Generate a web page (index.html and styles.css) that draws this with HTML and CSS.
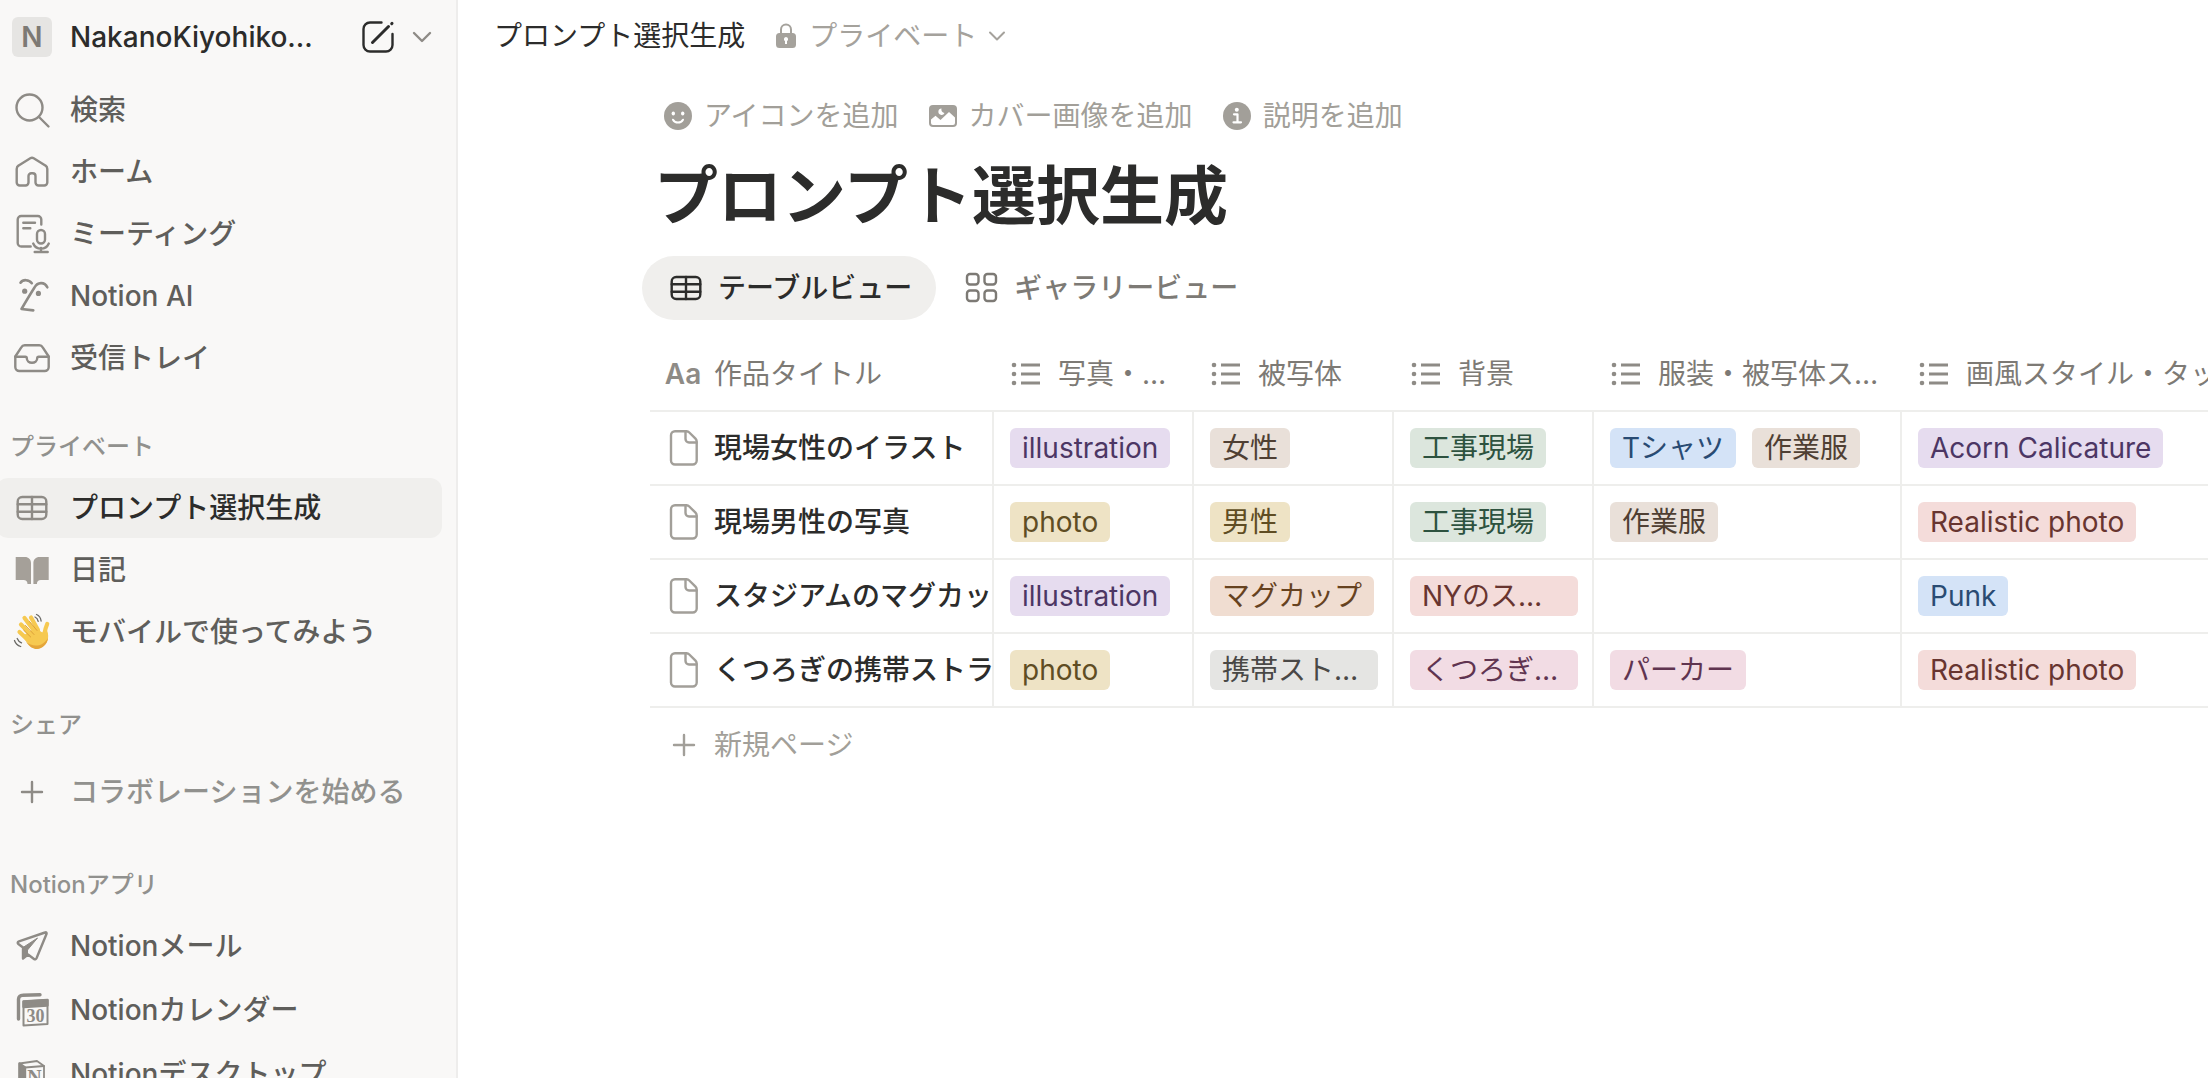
FILE: index.html
```html
<!DOCTYPE html>
<html lang="ja">
<head>
    <meta charset="utf-8">
    <meta name="viewport" content="width=device-width, initial-scale=1">
    <title>プロンプト選択生成</title>
    <link rel="stylesheet" href="styles.css">
</head>
<body>
    <!-- shared icons -->
    <svg class="sprite" aria-hidden="true">
        <symbol id="i-table" viewBox="0 0 40 40">
            <rect x="5.7" y="9" width="28.6" height="22" rx="4.5"/>
            <path d="M5.7 16.3h28.6M5.7 23.7h28.6M20 9v22"/>
        </symbol>
        <symbol id="i-list" viewBox="0 0 32 32">
            <path d="M11 7h19M11 16h19M11 25h19" stroke-width="3" stroke-linecap="butt"/>
            <g fill="currentColor" stroke="none"><circle cx="4" cy="7" r="2.3"/><circle cx="4" cy="16" r="2.3"/><circle cx="4" cy="25" r="2.3"/></g>
        </symbol>
        <symbol id="i-page" viewBox="0 0 40 40">
            <path d="M11 3.300h11.500a4 4 0 0 1 2.800 1.200l6.200 6.200a4 4 0 0 1 1.200 2.800V32.500a4 4 0 0 1-4 4H11a4 4 0 0 1-4-4V7.300a4 4 0 0 1 4-4z"/>
            <path d="M21.500 3.500v7.500a3.500 3.500 0 0 0 3.500 3.500h7.500"/>
        </symbol>
        <symbol id="i-plus" viewBox="0 0 40 40">
            <path d="M20 10v20M10 20h20"/>
        </symbol>
    </svg>

    <div class="app">
        <nav class="sidebar">
            <div class="workspace">
                <span class="badge">N</span>
                <button class="ws-name" type="button">NakanoKiyohiko...</button>
                <button class="icon-btn compose" type="button" aria-label="新規ページ">
                    <svg class="icon" viewBox="0 0 40 40">
                        <path d="M23.500 5.500H12A6.500 6.500 0 0 0 5.500 12v16A6.500 6.500 0 0 0 12 34.500h16a6.500 6.500 0 0 0 6.500-6.500V17"/>
                        <path d="M14.500 25.500L30.500 9.500M33.700 6.700l.3-.3" stroke-width="3"/>
                    </svg>
                </button>
                <button class="icon-btn chevron" type="button" aria-label="ワークスペースを切り替え">
                    <svg class="chev" viewBox="0 0 20 20"><path d="M2 6l8 8 8-8"/></svg>
                </button>
            </div>

            <ul class="menu">
                <li><a class="item" href="#">
                    <svg class="icon" viewBox="0 0 40 40"><circle cx="17.500" cy="17.500" r="13"/><path d="M27 27l9.500 9.500"/></svg>
                    <span>検索</span></a></li>
                <li><a class="item" href="#">
                    <svg class="icon" viewBox="0 0 40 40"><path d="M18.300 6.200L6.700 13.400A4 4 0 0 0 4.700 16.900V30.500a3 3 0 0 0 3 3H13.500a3 3 0 0 0 3-3V24a2.700 2.700 0 0 1 2.700-2.700h1.600a2.700 2.700 0 0 1 2.700 2.700v6.500a3 3 0 0 0 3 3h5.800a3 3 0 0 0 3-3V16.900a4 4 0 0 0-2-3.500L21.700 6.200a3.200 3.200 0 0 0-3.400 0z"/></svg>
                    <span>ホーム</span></a></li>
                <li><a class="item" href="#">
                    <svg class="icon" viewBox="0 0 40 40">
                        <path d="M29.300 10.500V5.500a3.500 3.500 0 0 0-3.500-3.500H9.200A3.500 3.500 0 0 0 5.700 5.500V29a3.500 3.500 0 0 0 3.500 3.500h9.500"/>
                        <path d="M11.300 8.800H23M11.300 14.300h7"/>
                        <rect x="25" y="16" width="8" height="13.500" rx="4"/>
                        <path d="M21.200 29.500a8.500 8.500 0 0 0 15.600 0M29 34v4M22.700 38h13"/>
                    </svg>
                    <span>ミーティング</span></a></li>
                <li><a class="item" href="#">
                    <svg class="icon" viewBox="0 0 40 40">
                        <path d="M8.500 6.700c2.500-3.600 8.500-3.300 11.300.5M21.300 34.400L9.500 33c3.500-6 9.500-16 13-21.500 3-5.500 10-6 12.800-.2" stroke-width="2.600"/>
                        <g fill="currentColor" stroke="none"><circle cx="12.700" cy="15.200" r="2.600"/><circle cx="26.400" cy="17.400" r="2.600"/></g>
                    </svg>
                    <span>Notion AI</span></a></li>
                <li><a class="item" href="#">
                    <svg class="icon" viewBox="0 0 40 40">
                        <path d="M3.300 18.500l6-9.200a4 4 0 0 1 3.400-2h14.600a4 4 0 0 1 3.400 2l6 9.200V29a4 4 0 0 1-4 4H7.300a4 4 0 0 1-4-4z"/>
                        <path d="M3.300 18.800h10a1.500 1.500 0 0 1 1.500 1.500 5.200 4.500 0 0 0 10.400 0 1.500 1.500 0 0 1 1.500-1.500h10"/>
                    </svg>
                    <span>受信トレイ</span></a></li>
            </ul>

            <h2 class="label">プライベート</h2>
            <ul class="menu">
                <li><a class="item active" href="#" aria-current="page">
                    <svg class="icon"><use href="#i-table"/></svg>
                    <span>プロンプト選択生成</span></a></li>
                <li><a class="item" href="#">
                    <svg class="icon book" viewBox="0 0 40 40"><path d="M3.700 7H13c3.500 0 6 2.500 6 6v21h-3.500c0-2.500-1.500-4-4-4H3.700zM36.700 7H27.400c-3.500 0-6 2.500-6 6v21h3.500c0-2.500 1.500-4 4-4h7.800z"/></svg>
                    <span>日記</span></a></li>
                <li><a class="item" href="#">
                    <svg class="icon" viewBox="0 0 40 40">
                        <g stroke="#f6c951" stroke-width="4.200">
                            <path d="M20 24L9 12.500M23 20L12.500 6M26 18L19 5.500M16 28L7.500 20"/>
                            <path d="M32 24c.8-4 1-7 3.200-12"/>
                        </g>
                        <path d="M10.500 24L25.500 14.500C27 18 28.500 20 30.500 20.500L33.500 16C36 19 36.500 23 36 26.500c-.8 5-5.500 10-11.500 10.300C19 36.500 15 31 10.500 24z" fill="#f6c951" stroke="none"/>
                        <path d="M14 30c4 5 7 7 11 7C30.500 36.500 35.500 32 36 26c-2.500 4-6 7-10.500 7.500C21 34 17.500 32.500 14 30z" fill="#e5a63a" stroke="none"/>
                        <path d="M11.700 18.200l7 6.800M13.500 13.500l8.500 9M17.500 9.500l7.500 9" stroke="#dda138" stroke-width="1"/>
                        <path d="M24.500 2.500c2.500 1 4.300 3.500 4.600 6.500M23 5c1.700.7 2.800 2.300 3.200 4.300M2.500 28.500c1 3 3.200 5 6.200 6M5.200 26.500c.8 2 2.300 3.500 4.300 4.400" stroke="#6b6a66" stroke-width="1.300"/>
                    </svg>
                    <span>モバイルで使ってみよう</span></a></li>
            </ul>

            <h2 class="label share-label">シェア</h2>
            <button class="item start" type="button">
                <svg class="icon"><use href="#i-plus"/></svg>
                <span>コラボレーションを始める</span>
            </button>

            <h2 class="label apps-label">Notionアプリ</h2>
            <ul class="menu apps">
                <li><a class="item" href="#">
                    <svg class="icon" viewBox="0 0 40 40">
                        <path d="M33 6.500L7 15.300c-1.500.6-1.700 1.800-.6 2.700L11 21.500v11l5-4 6 4.500c.9.700 2 .4 2.500-.7L34.500 8c.5-1.200-.3-2-1.500-1.500z"/>
                        <path d="M11 21.500L25.500 12 15.500 24v4.500L11 32.500z" fill="currentColor" stroke-width="1"/>
                    </svg>
                    <span>Notionメール</span></a></li>
                <li><a class="item" href="#">
                    <svg class="icon" viewBox="0 0 40 40">
                        <path d="M6.500 29V9a4 4 0 0 1 4-3.800L28 4.700" stroke-width="3.400"/>
                        <path d="M11.500 11.500l24-1.500v24l-24 1.500z" stroke-width="2"/>
                        <path d="M11.500 11.500l24-1.500v5.500l-24 1.500z" fill="currentColor"/>
                        <text x="23.500" y="31.500" class="cal-day">30</text>
                    </svg>
                    <span>Notionカレンダー</span></a></li>
                <li><a class="item" href="#">
                    <svg class="icon" viewBox="0 0 40 40">
                        <path d="M7.500 9.500L25 7l7 5v24H13l-5.500-5z" stroke-width="1.800"/>
                        <path d="M7.500 9.500l5.500 4V36l-5.500-5z" fill="currentColor"/>
                        <path d="M13 13.500l19-1.500" stroke-width="1.800"/>
                        <text x="22.500" y="30" class="cube-n">N</text>
                    </svg>
                    <span>Notionデスクトップ</span></a></li>
            </ul>
        </nav>

        <main class="main">
            <header class="topbar">
                <a class="crumb" href="#">プロンプト選択生成</a>
                <button class="share" type="button">
                    <svg class="lock" viewBox="0 0 22 28">
                        <path d="M6 13V7.500a5 5 0 0 1 10 0V13" fill="none" stroke="currentColor" stroke-width="2"/>
                        <path fill="currentColor" fill-rule="evenodd" d="M4.500 11h13a3.500 3.500 0 0 1 3.500 3.500v8a3.500 3.500 0 0 1-3.500 3.500h-13a3.500 3.500 0 0 1-3.500-3.500v-8A3.500 3.500 0 0 1 4.500 11zM11 15a2.200 2.200 0 0 0-1 4.100v3h2v-3A2.200 2.200 0 0 0 11 15z"/>
                    </svg>
                    <span>プライベート</span>
                    <svg class="chev small" viewBox="0 0 20 20"><path d="M3 6.500l7 7 7-7"/></svg>
                </button>
            </header>

            <div class="page">
                <div class="actions">
                    <button type="button">
                        <svg class="act-icon" viewBox="0 0 28 28"><circle cx="14" cy="14" r="14" fill="currentColor"/><ellipse cx="9.300" cy="11.500" rx="1.700" ry="2.100" fill="#fff"/><ellipse cx="18.700" cy="11.500" rx="1.700" ry="2.100" fill="#fff"/><path d="M9 17.700c2 3.800 8 3.800 10 0" fill="none" stroke="#fff" stroke-width="2" stroke-linecap="round"/></svg>
                        <span>アイコンを追加</span>
                    </button>
                    <button type="button">
                        <svg class="act-icon" viewBox="0 0 28 28"><rect y="3" width="28" height="22" rx="4" fill="currentColor"/><path d="M2 17.500l4.500-3.700 5 4.200 8.500-8 6 5.500V21a2 2 0 0 1-2 2H4a2 2 0 0 1-2-2z" fill="#fff"/><path d="M12.500 6.500a3.200 3.200 0 1 0 3 4.500 3.500 3.500 0 0 1-3-4.500z" fill="#fff"/></svg>
                        <span>カバー画像を追加</span>
                    </button>
                    <button type="button">
                        <svg class="act-icon" viewBox="0 0 28 28"><circle cx="14" cy="14" r="14" fill="currentColor"/><circle cx="13.800" cy="7.800" r="2" fill="#fff"/><path d="M11 12.300h3.500v7.500M10.500 20.300h7.500" fill="none" stroke="#fff" stroke-width="2.200"/></svg>
                        <span>説明を追加</span>
                    </button>
                </div>

                <h1>プロンプト選択生成</h1>

                <div class="tabs">
                    <button class="tab current" type="button">
                        <svg class="tab-icon"><use href="#i-table"/></svg>
                        <span>テーブルビュー</span>
                    </button>
                    <button class="tab" type="button">
                        <svg class="tab-icon" viewBox="0 0 40 40"><rect x="5" y="6" width="11.500" height="10.500" rx="3"/><rect x="22.500" y="6" width="11.500" height="10.500" rx="3"/><rect x="5" y="22.500" width="11.500" height="10.500" rx="3"/><rect x="22.500" y="22.500" width="11.500" height="10.500" rx="3"/></svg>
                        <span>ギャラリービュー</span>
                    </button>
                </div>

                <table class="db">
                    <colgroup>
                        <col class="c-title"><col class="c-std"><col class="c-std"><col class="c-std"><col class="c-wide"><col class="c-style">
                    </colgroup>
                    <thead>
                        <tr>
                            <th scope="col"><div class="head title-head"><span class="aa" aria-hidden="true">Aa</span><span class="name">作品タイトル</span></div></th>
                            <th scope="col"><div class="head"><svg class="list"><use href="#i-list"/></svg><span class="name">写真・イラスト</span></div></th>
                            <th scope="col"><div class="head"><svg class="list"><use href="#i-list"/></svg><span class="name">被写体</span></div></th>
                            <th scope="col"><div class="head"><svg class="list"><use href="#i-list"/></svg><span class="name">背景</span></div></th>
                            <th scope="col"><div class="head"><svg class="list"><use href="#i-list"/></svg><span class="name">服装・被写体スタイル</span></div></th>
                            <th scope="col"><div class="head"><svg class="list"><use href="#i-list"/></svg><span class="name">画風スタイル・タッチ</span></div></th>
                        </tr>
                    </thead>
                    <tbody>
                        <tr>
                            <td><a class="row-title" href="#"><svg class="page-icon"><use href="#i-page"/></svg><span>現場女性のイラスト</span></a></td>
                            <td><div class="tags"><span class="tag purple">illustration</span></div></td>
                            <td><div class="tags"><span class="tag brown">女性</span></div></td>
                            <td><div class="tags"><span class="tag green">工事現場</span></div></td>
                            <td><div class="tags"><span class="tag blue">Tシャツ</span><span class="tag brown">作業服</span></div></td>
                            <td><div class="tags"><span class="tag purple">Acorn Calicature</span></div></td>
                        </tr>
                        <tr>
                            <td><a class="row-title" href="#"><svg class="page-icon"><use href="#i-page"/></svg><span>現場男性の写真</span></a></td>
                            <td><div class="tags"><span class="tag yellow">photo</span></div></td>
                            <td><div class="tags"><span class="tag yellow">男性</span></div></td>
                            <td><div class="tags"><span class="tag green">工事現場</span></div></td>
                            <td><div class="tags"><span class="tag brown">作業服</span></div></td>
                            <td><div class="tags"><span class="tag red">Realistic photo</span></div></td>
                        </tr>
                        <tr>
                            <td><a class="row-title" href="#"><svg class="page-icon"><use href="#i-page"/></svg><span>スタジアムのマグカップ</span></a></td>
                            <td><div class="tags"><span class="tag purple">illustration</span></div></td>
                            <td><div class="tags"><span class="tag orange">マグカップ</span></div></td>
                            <td><div class="tags"><span class="tag red">NYのスタジアム</span></div></td>
                            <td></td>
                            <td><div class="tags"><span class="tag blue">Punk</span></div></td>
                        </tr>
                        <tr>
                            <td><a class="row-title" href="#"><svg class="page-icon"><use href="#i-page"/></svg><span>くつろぎの携帯ストラップ</span></a></td>
                            <td><div class="tags"><span class="tag yellow">photo</span></div></td>
                            <td><div class="tags"><span class="tag gray">携帯ストラップ</span></div></td>
                            <td><div class="tags"><span class="tag pink">くつろぎ空間</span></div></td>
                            <td><div class="tags"><span class="tag pink">パーカー</span></div></td>
                            <td><div class="tags"><span class="tag red">Realistic photo</span></div></td>
                        </tr>
                    </tbody>
                </table>
                <button class="new-page" type="button">
                    <svg class="page-icon"><use href="#i-plus"/></svg>
                    <span>新規ページ</span>
                </button>
            </div>
        </main>
    </div>
</body>
</html>
```
FILE: styles.css
```css
* {box-sizing:border-box;}
body {margin:0; background:#fff; color:#2c2c2b; font-family:Inter, "Noto Sans CJK JP", sans-serif; font-size:28px; line-height:40px;}
button {margin:0; padding:0; border:0; background:none; color:inherit; font:inherit; text-align:left; cursor:pointer;}
a {color:inherit; text-decoration:none;}
ul {list-style:none; margin:0; padding:0;}
svg {flex:none; fill:none; stroke:currentColor; stroke-width:2.4; stroke-linecap:round; stroke-linejoin:round;}
.sprite {position:absolute; width:0; height:0;}

.app {display:flex; height:100vh; overflow:hidden;}

/* sidebar */
.sidebar {flex:none; width:458px; padding-right:14px; overflow:hidden; background:#f9f8f7; border-right:2px solid #eeedec; color:#5f5e5b;}
.workspace {display:flex; align-items:center; height:74px; margin-bottom:6px; padding-left:12px;}
.badge {flex:none; width:40px; height:40px; margin-right:18px; border-radius:6px; background:#e6e5e3; color:#7d7a75; font-weight:600; text-align:center;}
.ws-name {flex:1; color:#2c2c2b; font-weight:500; white-space:nowrap;}
.icon-btn {display:flex;}
.compose {color:#2c2c2b;}
.chevron {margin:0 10px 0 14px; color:#8e8b86;}
.chev {width:20px; height:20px;}
.icon {width:40px; height:40px; color:#8e8b86;}
.compose .icon {color:#2c2c2b;}
.menu {display:grid; gap:2px;}
.item {display:flex; align-items:center; gap:18px; height:60px; margin-left:-4px; padding-left:16px; border-radius:12px; font-weight:500; white-space:nowrap;}
.item.active {background:#f0efed; color:#2c2c2b;}
.label {margin:38px 0 10px 10px; color:#91918e; font-size:24px; font-weight:500; line-height:42px;}
.share-label {margin-top:42px;}
.start {margin-top:16px; color:#91918e;}
.apps-label {margin-top:42px;}
.apps {gap:4px;}
.book {color:#a5a099; fill:currentColor; stroke:none;}
.cal-day, .cube-n {fill:#8e8b86; stroke:none; text-anchor:middle; font-family:"Liberation Serif", serif; font-weight:700;}
.cal-day {font-size:18px;}
.cube-n {font-size:20px;}

/* top bar */
.main {flex:1; min-width:0; overflow:hidden;}
.topbar {display:flex; align-items:center; gap:30px; height:72px; padding-left:36px;}
.share {display:flex; align-items:center; color:#a5a29c;}
.lock {width:22px; height:28px; margin-right:12px; stroke:none;}
.small {margin-left:10px; stroke-width:2;}

/* page head */
.page {padding:20px 0 0 192px;}
.actions {display:flex; gap:30px; padding-left:14px; color:#a29f99;}
.actions button {display:flex; align-items:center; gap:12px; height:48px; white-space:nowrap;}
.act-icon {width:28px; height:28px; stroke:none;}
h1 {margin:12px 0 16px 4px; font-size:64px; font-weight:700; line-height:88px;}
.tabs {display:flex; gap:2px; margin-left:-8px;}
.tab {display:flex; align-items:center; gap:12px; height:64px; padding:0 24px; border-radius:32px; color:#7d7a75; font-weight:500; white-space:nowrap;}
.tab.current {background:#f0efed; color:#2c2c2b;}
.tab-icon {width:40px; height:40px;}

/* table */
.db {width:1652px; margin-top:18px; border-collapse:separate; border-spacing:0; table-layout:fixed;}
.c-title {width:344px;}
.c-std {width:200px;}
.c-wide {width:308px;}
.c-style {width:400px;}
.db th, .db td {padding:0; border-bottom:2px solid #eeeeec; overflow:hidden;}
.db td {height:74px; border-right:2px solid #eeeeec;}
.head {display:flex; align-items:center; gap:16px; height:72px; padding:0 14px 0 16px; color:#7d7a75; font-weight:400;}
.title-head {gap:12px; padding-left:14px;}
.name {min-width:0; overflow:hidden; text-overflow:ellipsis; white-space:nowrap;}
.aa {width:38px; color:#8e8b86; font-weight:600;}
.list {width:32px; height:32px; color:#8e8b86;}
.row-title, .new-page {display:flex; align-items:center; gap:10px; padding-left:14px; white-space:nowrap;}
.row-title {font-weight:500;}
.page-icon {width:40px; height:40px; color:#a29f99;}
.tags {display:flex; gap:16px; padding:0 14px 0 16px;}
.tag {min-width:0; height:40px; padding:0 12px; overflow:hidden; border-radius:6px; text-overflow:ellipsis; white-space:nowrap;}
.purple {background:#e6dcef; color:#4c3664;}
.yellow {background:#eee3c5; color:#5f4d23;}
.brown {background:#e9e0d9; color:#4f3f33;}
.green {background:#dce6dd; color:#2d523f;}
.blue {background:#d4e3f7; color:#294b73;}
.orange {background:#f0ddd1; color:#66421f;}
.red {background:#f4dcda; color:#683530;}
.gray {background:#e5e5e3; color:#494846;}
.pink {background:#f2dce4; color:#603450;}
.new-page {height:74px; color:#a29f99;}
```
